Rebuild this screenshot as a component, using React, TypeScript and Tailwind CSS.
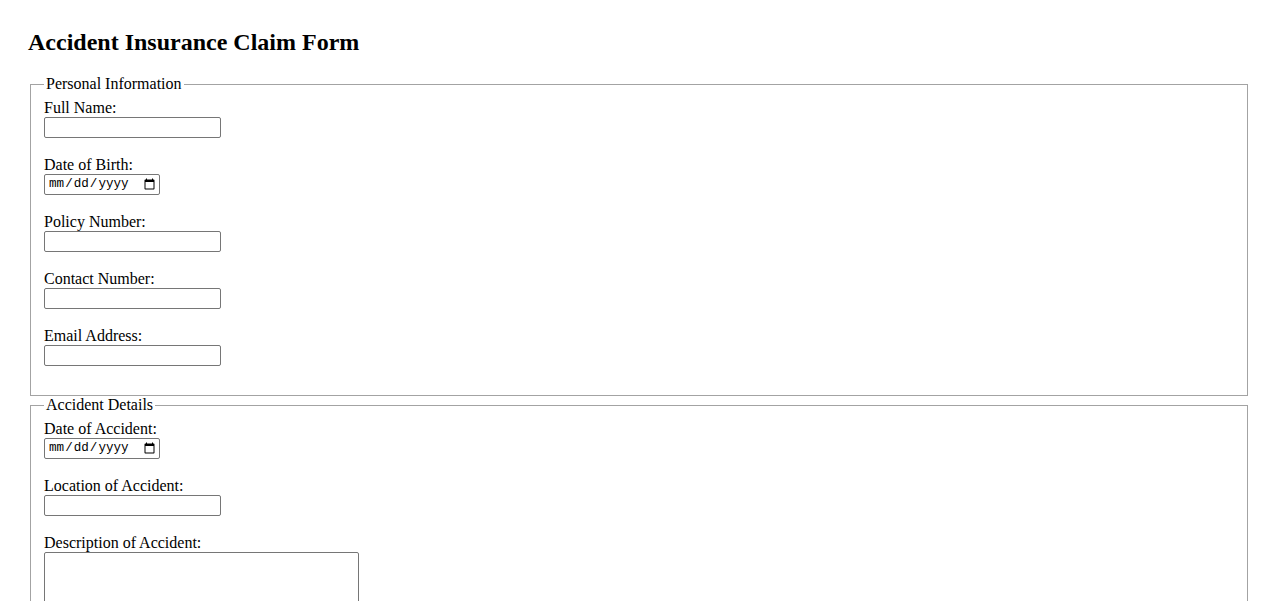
import React from 'react';

const textInput =
  "block w-[177px] h-[21px] px-[2px] py-[1px] border border-[#767676] rounded-[2px] bg-white text-[13.33px] font-['Liberation_Sans',sans-serif] text-black outline-none";
const dateInput =
  "block w-[116px] h-[21px] pl-[3px] pr-[1px] border border-[#767676] rounded-[2px] bg-white text-[12.6px] font-['Liberation_Mono',monospace] text-black outline-none";

const Field: React.FC<{ label: string; id: string; type?: string; area?: boolean }> = ({ label, id, type = 'text', area }) => (
  <div className="mb-[18px]">
    <label htmlFor={id} className="block h-[18px] leading-[18px]">
      {label}
    </label>
    {area ? (
      <textarea
        id={id}
        className="block w-[315px] h-[86px] px-[2px] py-[2px] border border-[#767676] rounded-[2px] bg-white text-[13.33px] font-['Liberation_Mono',monospace] resize outline-none"
      />
    ) : (
      <input id={id} type={type} className={type === 'date' ? dateInput : textInput} />
    )}
  </div>
);

const Section: React.FC<{ title: string; children: React.ReactNode }> = ({ title, children }) => (
  <fieldset className="mx-[2px] px-[13px] pt-[6px] pb-[11px] border border-[#a3a3a3] min-w-0">
    <legend className="px-[2px] leading-[18px]">{title}</legend>
    {children}
  </fieldset>
);

export default function App() {
  return (
    <div className="min-h-screen bg-white text-black font-['Liberation_Serif','Times_New_Roman',serif] text-[16px] px-[28px] pt-[28px]">
      <h2 className="text-[24px] font-bold leading-[28px] mb-[19px]">Accident Insurance Claim Form</h2>
      <form>
        <Section title="Personal Information">
          <Field label="Full Name:" id="fullName" />
          <Field label="Date of Birth:" id="dob" type="date" />
          <Field label="Policy Number:" id="policy" />
          <Field label="Contact Number:" id="contact" type="tel" />
          <Field label="Email Address:" id="email" type="email" />
        </Section>
        <Section title="Accident Details">
          <Field label="Date of Accident:" id="accDate" type="date" />
          <Field label="Location of Accident:" id="location" />
          <Field label="Description of Accident:" id="desc" area />
        </Section>
      </form>
    </div>
  );
}
